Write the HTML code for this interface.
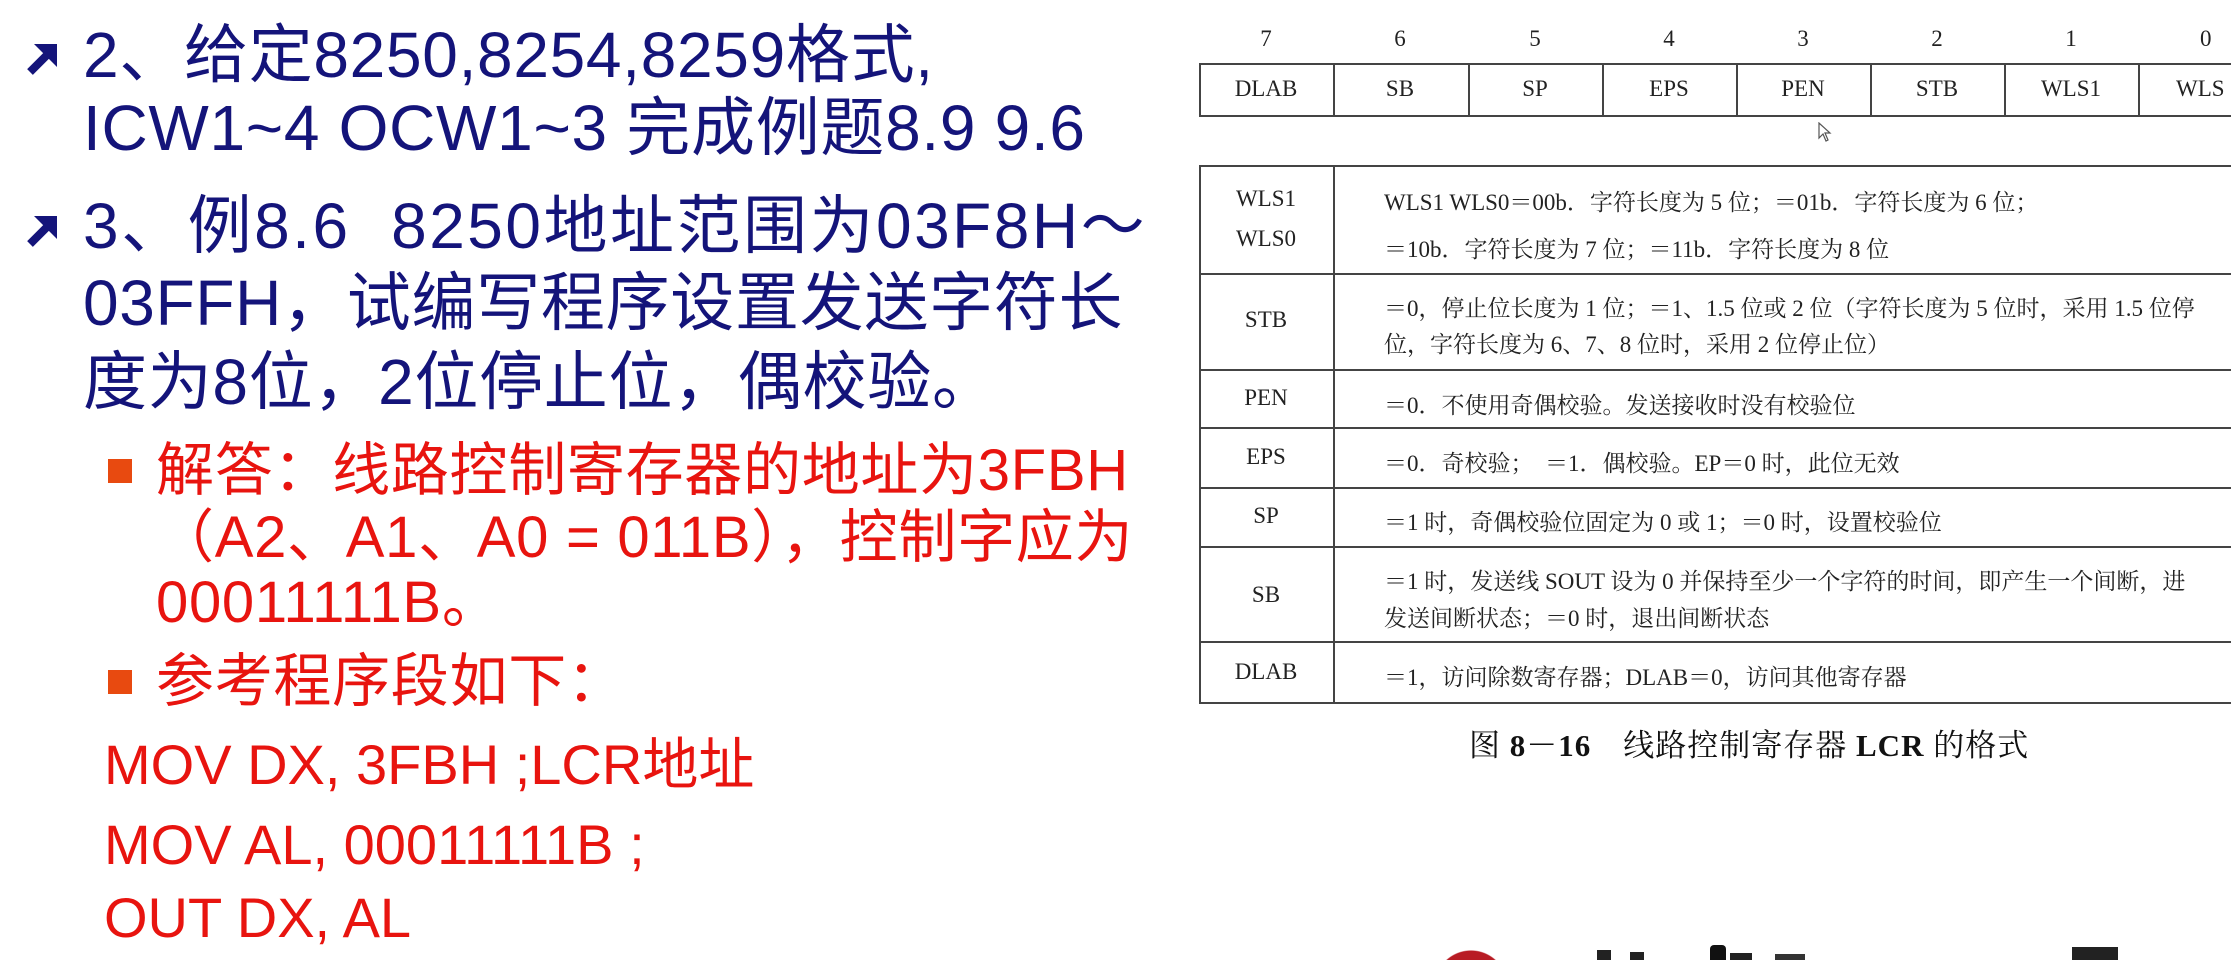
<!DOCTYPE html>
<html style="overflow:hidden"><head><meta charset="utf-8"><style>
html,body{margin:0;padding:0;background:#fff;}
body{width:2231px;height:960px;position:relative;overflow:hidden;}
.l{position:absolute;white-space:nowrap;font-family:"Liberation Sans","Noto Sans CJK SC",sans-serif;line-height:80px;height:80px;}
.b{color:#14147a;font-size:64px;left:83px;letter-spacing:0.7px;}
.r{color:#e8140f;font-size:58px;letter-spacing:0.7px;}
.m{color:#e8140f;font-size:56px;left:104px;}
.arr{position:absolute;left:24px;width:36px;height:36px;}
.sq{position:absolute;left:108px;width:24px;height:24px;background:#e84a10;}
.t{position:absolute;font-family:"Liberation Serif","Noto Serif CJK SC",serif;color:#222;font-size:23px;white-space:nowrap;}
.hl{position:absolute;height:2px;background:#444;}
.vl{position:absolute;width:2px;background:#444;}
.c{text-align:center;width:134px;}
</style></head><body>

<svg class="arr" style="top:40px" viewBox="0 0 36 36"><path d="M6 32 L25 13" stroke="#14147a" stroke-width="8" fill="none"/><path d="M10 4 L33 4 L33 27 Z" fill="#14147a"/></svg>
<div class="l b" style="top:15px">2、给定8250,8254,8259格式,</div>
<div class="l b" style="top:88px">ICW1~4 OCW1~3 完成例题8.9 9.6</div>
<svg class="arr" style="top:212px" viewBox="0 0 36 36"><path d="M6 32 L25 13" stroke="#14147a" stroke-width="8" fill="none"/><path d="M10 4 L33 4 L33 27 Z" fill="#14147a"/></svg>
<div class="l b" style="top:186px;letter-spacing:2.5px">3、例8.6&nbsp; 8250地址范围为03F8H～</div>
<div class="l b" style="top:263px">03FFH，试编写程序设置发送字符长</div>
<div class="l b" style="top:342px">度为8位，2位停止位，偶校验。</div>

<div class="sq" style="top:459px"></div>
<div class="l r" style="top:431px;left:156px">解答：线路控制寄存器的地址为3FBH</div>
<div class="l r" style="top:498px;left:156px">（A2、A1、A0 = 011B），控制字应为</div>
<div class="l r" style="top:563px;left:156px">00011111B。</div>
<div class="sq" style="top:670px"></div>
<div class="l r" style="top:642px;left:156px">参考程序段如下：</div>
<div class="l m" style="top:725px">MOV DX, 3FBH ;LCR地址</div>
<div class="l m" style="top:805px">MOV AL, 00011111B ;</div>
<div class="l m" style="top:878px">OUT DX, AL</div>

<div class="t c" style="left:1199px;top:26px">7</div>
<div class="t c" style="left:1333px;top:26px">6</div>
<div class="t c" style="left:1468px;top:26px">5</div>
<div class="t c" style="left:1602px;top:26px">4</div>
<div class="t c" style="left:1736px;top:26px">3</div>
<div class="t c" style="left:1870px;top:26px">2</div>
<div class="t c" style="left:2004px;top:26px">1</div>
<div class="t" style="left:2200px;top:26px">0</div>
<div class="hl" style="left:1199px;top:63px;width:1032px"></div>
<div class="hl" style="left:1199px;top:115px;width:1032px"></div>
<div class="vl" style="left:1199px;top:63px;height:54px"></div>
<div class="vl" style="left:1333px;top:63px;height:54px"></div>
<div class="vl" style="left:1468px;top:63px;height:54px"></div>
<div class="vl" style="left:1602px;top:63px;height:54px"></div>
<div class="vl" style="left:1736px;top:63px;height:54px"></div>
<div class="vl" style="left:1870px;top:63px;height:54px"></div>
<div class="vl" style="left:2004px;top:63px;height:54px"></div>
<div class="vl" style="left:2138px;top:63px;height:54px"></div>
<div class="t c" style="left:1199px;top:76px">DLAB</div>
<div class="t c" style="left:1333px;top:76px">SB</div>
<div class="t c" style="left:1468px;top:76px">SP</div>
<div class="t c" style="left:1602px;top:76px">EPS</div>
<div class="t c" style="left:1736px;top:76px">PEN</div>
<div class="t c" style="left:1870px;top:76px">STB</div>
<div class="t c" style="left:2004px;top:76px">WLS1</div>
<div class="t" style="left:2176px;top:76px">WLS</div>
<svg style="position:absolute;left:1818px;top:122px" width="14" height="20" viewBox="0 0 14 20"><path d="M1 1 L1 16 L5 12 L8 19 L10 18 L7 11 L12 11 Z" fill="#fff" stroke="#555" stroke-width="1.2"/></svg>

<div class="hl" style="left:1199px;top:165px;width:1032px"></div>
<div class="hl" style="left:1199px;top:273px;width:1032px"></div>
<div class="hl" style="left:1199px;top:369px;width:1032px"></div>
<div class="hl" style="left:1199px;top:427px;width:1032px"></div>
<div class="hl" style="left:1199px;top:487px;width:1032px"></div>
<div class="hl" style="left:1199px;top:546px;width:1032px"></div>
<div class="hl" style="left:1199px;top:641px;width:1032px"></div>
<div class="hl" style="left:1199px;top:702px;width:1032px"></div>
<div class="vl" style="left:1199px;top:165px;height:539px"></div>
<div class="vl" style="left:1333px;top:165px;height:539px"></div>

<div class="t c" style="left:1199px;top:186px">WLS1</div>
<div class="t c" style="left:1199px;top:226px">WLS0</div>
<div class="t c" style="left:1199px;top:307px">STB</div>
<div class="t c" style="left:1199px;top:385px">PEN</div>
<div class="t c" style="left:1199px;top:444px">EPS</div>
<div class="t c" style="left:1199px;top:503px">SP</div>
<div class="t c" style="left:1199px;top:582px">SB</div>
<div class="t c" style="left:1199px;top:659px">DLAB</div>

<div class="t" style="left:1384px;top:184px">WLS1 WLS0＝00b．字符长度为 5 位；＝01b．字符长度为 6 位；</div>
<div class="t" style="left:1384px;top:231px">＝10b．字符长度为 7 位；＝11b．字符长度为 8 位</div>
<div class="t" style="left:1384px;top:290px">＝0，停止位长度为 1 位；＝1、1.5 位或 2 位（字符长度为 5 位时，采用 1.5 位停</div>
<div class="t" style="left:1384px;top:326px">位，字符长度为 6、7、8 位时，采用 2 位停止位）</div>
<div class="t" style="left:1384px;top:387px">＝0．不使用奇偶校验。发送接收时没有校验位</div>
<div class="t" style="left:1384px;top:445px">＝0．奇校验；　＝1．偶校验。EP＝0 时，此位无效</div>
<div class="t" style="left:1384px;top:504px">＝1 时，奇偶校验位固定为 0 或 1；＝0 时，设置校验位</div>
<div class="t" style="left:1384px;top:563px">＝1 时，发送线 SOUT 设为 0 并保持至少一个字符的时间，即产生一个间断，进</div>
<div class="t" style="left:1384px;top:600px">发送间断状态；＝0 时，退出间断状态</div>
<div class="t" style="left:1384px;top:659px">＝1，访问除数寄存器；DLAB＝0，访问其他寄存器</div>

<div class="t" style="left:1469px;top:720px;font-size:31px;color:#111;letter-spacing:1px">图 <b>8－16</b>　线路控制寄存器 <b>LCR</b> 的格式</div>

<div style="position:absolute;left:1434px;top:950px;width:74px;height:10px;background:radial-gradient(circle at 37px 37px,#b81c24 36px,transparent 37px)"></div>
<div style="position:absolute;left:1597px;top:950px;width:14px;height:10px;background:#222"></div>
<div style="position:absolute;left:1630px;top:952px;width:14px;height:8px;background:#222"></div>
<div style="position:absolute;left:1710px;top:945px;width:16px;height:15px;background:#111;border-radius:4px 4px 0 0"></div>
<div style="position:absolute;left:1730px;top:953px;width:22px;height:7px;background:#222"></div>
<div style="position:absolute;left:1775px;top:954px;width:30px;height:6px;background:#333"></div>
<div style="position:absolute;left:2072px;top:947px;width:46px;height:13px;background:#222"></div>
</body></html>
